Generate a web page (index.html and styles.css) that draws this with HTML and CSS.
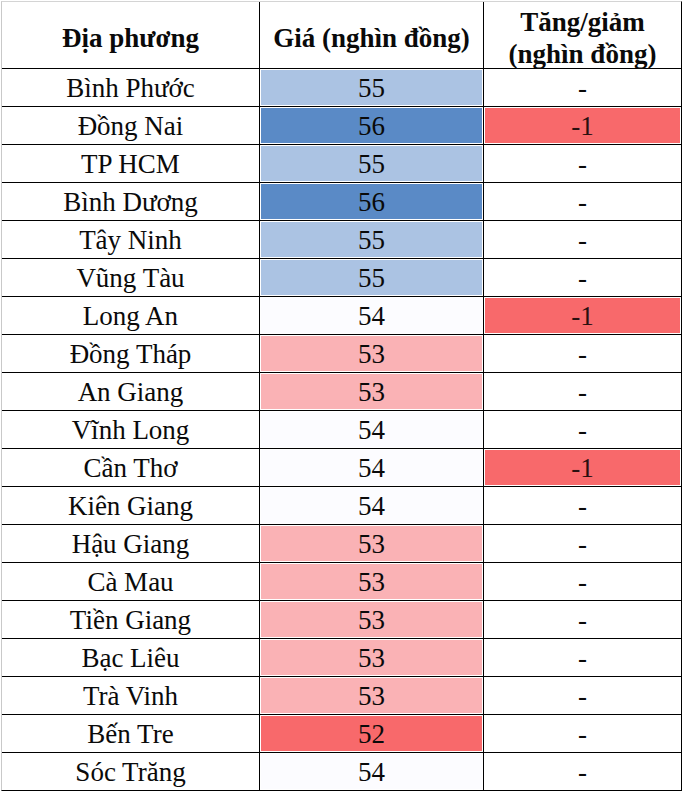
FILE: index.html
```html
<!DOCTYPE html>
<html lang="vi">
<head>
<meta charset="utf-8">
<title>Giá</title>
<link rel="stylesheet" href="styles.css">
</head>
<body>
<div class="sheet">
  <div class="cell head">Địa phương</div>
  <div class="cell head">Giá (nghìn đồng)</div>
  <div class="cell head">Tăng/giảm<br>(nghìn đồng)</div>

  <div class="cell">Bình Phước</div><div class="cell p55">55</div><div class="cell">-</div>
  <div class="cell">Đồng Nai</div><div class="cell p56">56</div><div class="cell down">-1</div>
  <div class="cell">TP HCM</div><div class="cell p55">55</div><div class="cell">-</div>
  <div class="cell">Bình Dương</div><div class="cell p56">56</div><div class="cell">-</div>
  <div class="cell">Tây Ninh</div><div class="cell p55">55</div><div class="cell">-</div>
  <div class="cell">Vũng Tàu</div><div class="cell p55">55</div><div class="cell">-</div>
  <div class="cell">Long An</div><div class="cell p54">54</div><div class="cell down">-1</div>
  <div class="cell">Đồng Tháp</div><div class="cell p53">53</div><div class="cell">-</div>
  <div class="cell">An Giang</div><div class="cell p53">53</div><div class="cell">-</div>
  <div class="cell">Vĩnh Long</div><div class="cell p54">54</div><div class="cell">-</div>
  <div class="cell">Cần Thơ</div><div class="cell p54">54</div><div class="cell down">-1</div>
  <div class="cell">Kiên Giang</div><div class="cell p54">54</div><div class="cell">-</div>
  <div class="cell">Hậu Giang</div><div class="cell p53">53</div><div class="cell">-</div>
  <div class="cell">Cà Mau</div><div class="cell p53">53</div><div class="cell">-</div>
  <div class="cell">Tiền Giang</div><div class="cell p53">53</div><div class="cell">-</div>
  <div class="cell">Bạc Liêu</div><div class="cell p53">53</div><div class="cell">-</div>
  <div class="cell">Trà Vinh</div><div class="cell p53">53</div><div class="cell">-</div>
  <div class="cell">Bến Tre</div><div class="cell p52">52</div><div class="cell">-</div>
  <div class="cell">Sóc Trăng</div><div class="cell p54">54</div><div class="cell">-</div>
</div>
</body>
</html>
```
FILE: styles.css
```css
html, body {
  margin: 0;
  padding: 0;
  background: #ffffff;
}

.sheet {
  margin: 1px 0 0 1px;
  width: 679px;
  display: grid;
  grid-template-columns: 257px 223px 197px;
  grid-template-rows: 66px repeat(19, 37px);
  gap: 1px;
  background: #000000;
  border-left: 1px solid #c9c9c9;
  border-top: 1px solid #d4d4d4;
  border-right: 1px solid #000000;
  border-bottom: 1px solid #000000;
  font-family: "Liberation Serif", "Times New Roman", serif;
  font-size: 27px;
  color: #0a0a0a;
}

.cell {
  background: #ffffff;
  display: flex;
  align-items: center;
  justify-content: center;
  text-align: center;
  line-height: 32px;
  padding-top: 1px;
  box-sizing: border-box;
}

.head {
  font-weight: bold;
  padding-top: 5px;
}

.p52, .p53, .p54, .p55, .p56, .down {
  box-shadow: inset 0 0 0 1px #ffffff;
}

.p52 { background: #f8696b; }
.p53 { background: #fab2b5; }
.p54 { background: #fcfcff; }
.p55 { background: #abc3e3; }
.p56 { background: #5a8ac6; }
.down { background: #f8696b; color: #2a1010; }
```
